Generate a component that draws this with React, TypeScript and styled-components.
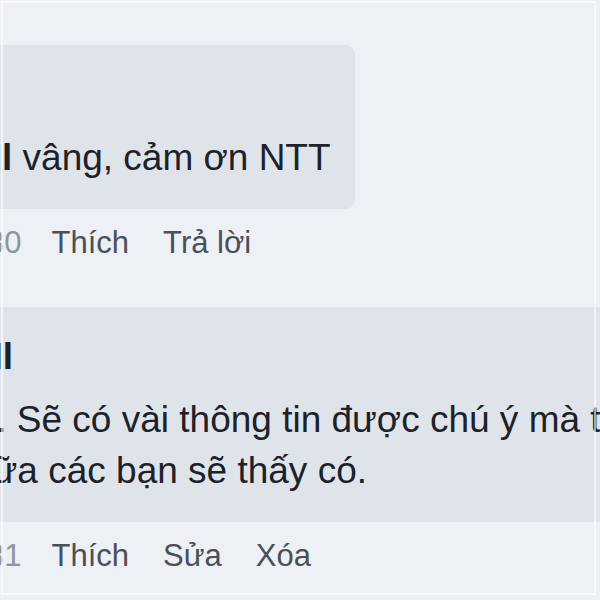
import React from 'react'
import styled, { createGlobalStyle } from 'styled-components'

const GlobalStyle = createGlobalStyle`
  html, body {
    margin: 0;
    padding: 0;
    background: #edf1f6;
  }
  body {
    font-family: "Liberation Sans", Arial, sans-serif;
  }
`

const Page = styled.div`
  position: relative;
  width: 600px;
  height: 600px;
  overflow: hidden;
  background: #edf1f6;

  /* faint frame of the original crop */
  &::after {
    content: '';
    position: absolute;
    inset: 1px 4px 5px 1px;
    border: 2px solid rgba(255, 255, 255, 0.6);
    pointer-events: none;
  }
`

const Thread = styled.div`
  display: flex;
  flex-direction: column;
  align-items: flex-start;
  padding-top: 45px;
  margin-left: -133px;
`

const Comment = styled.div<{ $shift?: number }>`
  display: flex;
  flex-direction: column;
  align-items: flex-start;
  margin-left: ${(p) => p.$shift ?? 0}px;

  & + & {
    margin-top: 44px;
  }
`

const Bubble = styled.div<{ $width: number }>`
  box-sizing: border-box;
  width: ${(p) => p.$width}px;
  padding: 24px 24px 26px;
  background: #dfe4eb;
  border-radius: 9px;
  font-size: 37px;
  line-height: 51px;
  color: #1d2129;
  white-space: nowrap;
`

const Author = styled.div`
  font-weight: 700;
  margin-bottom: 12px;
`

const Tag = styled.span`
  font-weight: 700;
`

const Text = styled.div``

const Actions = styled.div<{ $indent: number }>`
  display: flex;
  gap: 34px;
  margin-top: 14px;
  margin-left: ${(p) => p.$indent}px;
  font-size: 31px;
  line-height: 40px;
  color: #4b4f56;
  white-space: nowrap;
`

const Time = styled.span`
  color: #8d949e;
  margin-right: -4px;
`

const Action = styled.span`
  cursor: pointer;
`

export default function App() {
  return (
    <Page>
      <GlobalStyle />
      <Thread>
        <Comment>
          <Bubble $width={488}>
            <Author>Minh</Author>
            <Text>
              <Tag>Bảo Ml</Tag> vâng, cảm ơn NTT
            </Text>
          </Bubble>
          <Actions $indent={77}>
            <Time>10:30</Time>
            <Action>Thích</Action>
            <Action>Trả lời</Action>
          </Actions>
        </Comment>

        <Comment $shift={81}>
          <Bubble $width={1000}>
            <Author>Ml</Author>
            <Text>
              ơ. Sẽ có vài thông tin được chú ý mà tôi chưa cập nhật, lát
              <br />
              nữa các bạn sẽ thấy có.
            </Text>
          </Bubble>
          <Actions $indent={-4}>
            <Time>10:31</Time>
            <Action>Thích</Action>
            <Action>Sửa</Action>
            <Action>Xóa</Action>
          </Actions>
        </Comment>
      </Thread>
    </Page>
  )
}
